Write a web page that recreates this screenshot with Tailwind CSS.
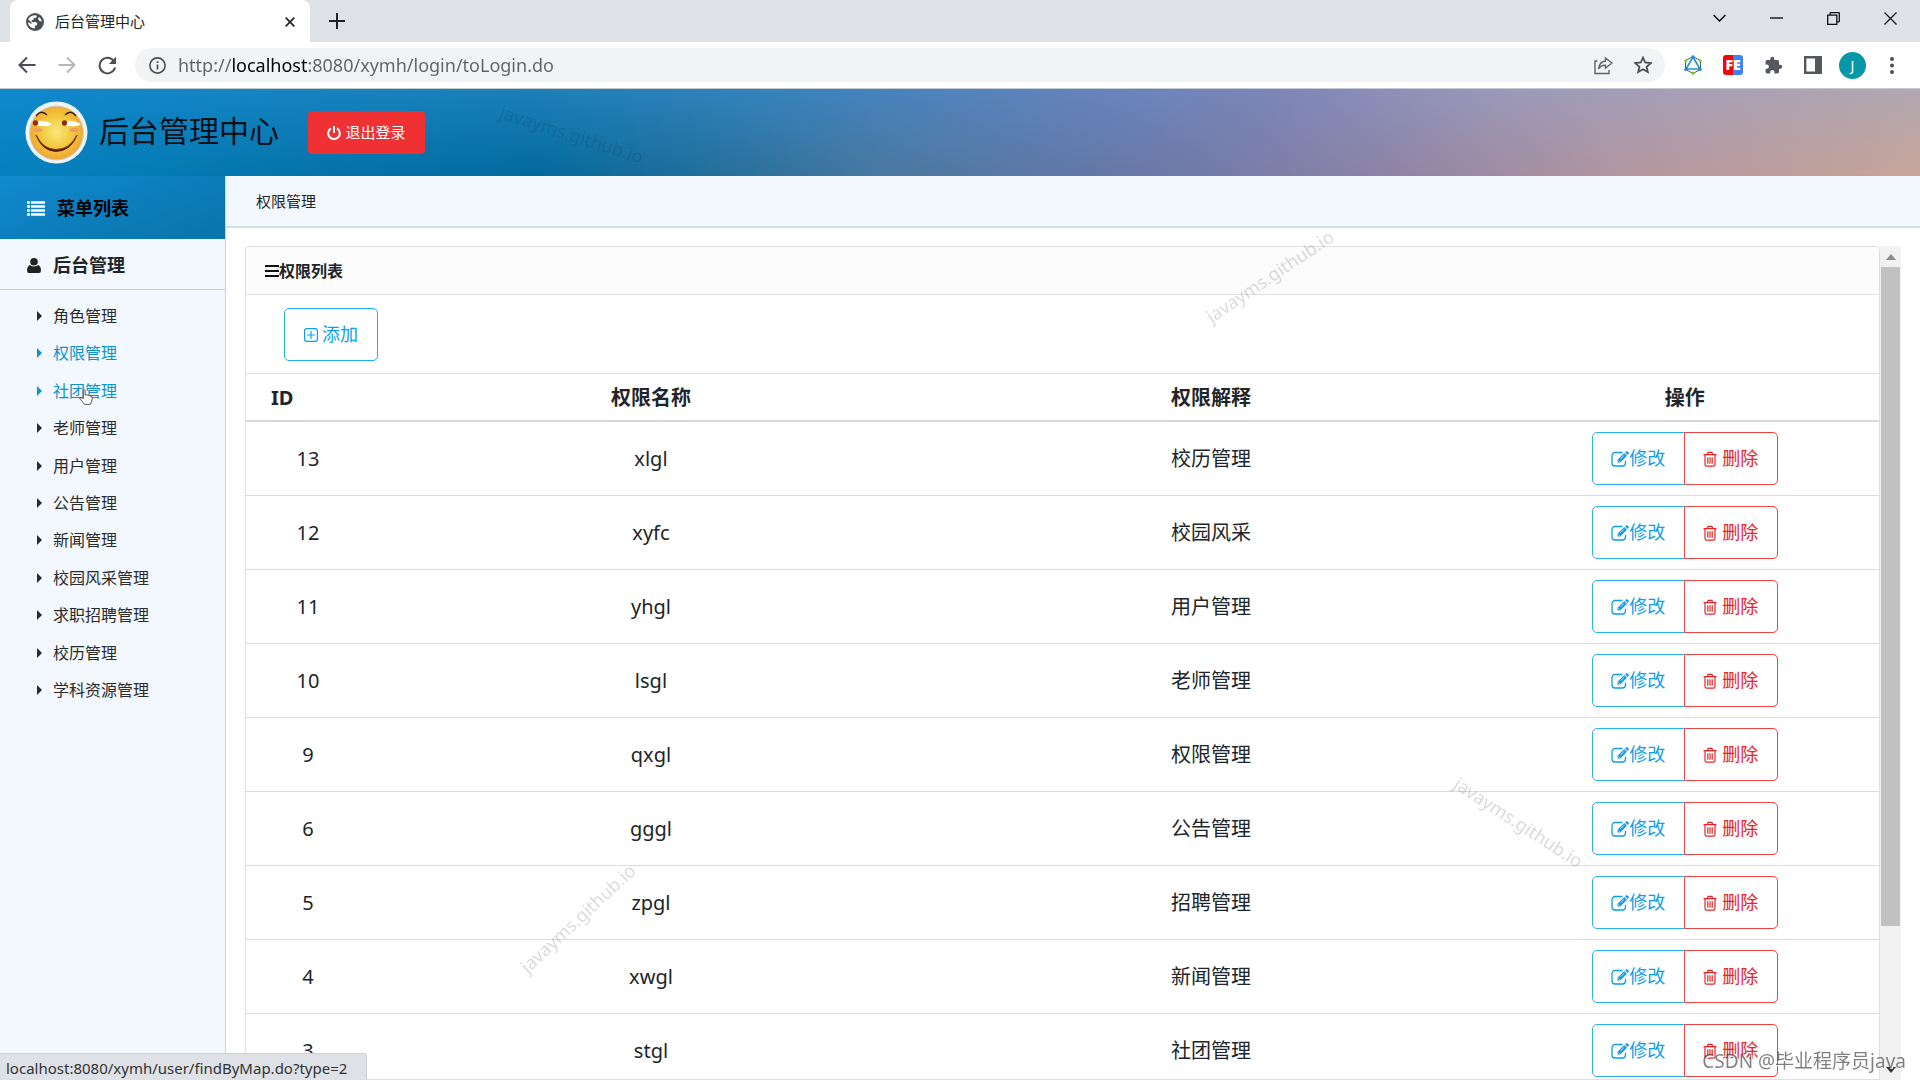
<!DOCTYPE html>
<html lang="zh-CN">
<head>
<meta charset="utf-8">
<title>后台管理中心</title>
<script src="https://cdn.jsdelivr.net/npm/@tailwindcss/browser@4"></script>
</head>
<body class="flex h-screen flex-col overflow-hidden bg-white font-['Noto_Sans','Noto_Sans_CJK_SC',sans-serif] text-[#212529]">

<svg class="hidden" aria-hidden="true">
  <symbol id="edit" viewBox="0 0 18 16">
    <path d="M11.5 1.5H4A3 3 0 0 0 1 4.500V12A3 3 0 0 0 4 15H11.500A3 3 0 0 0 14.500 12V9.800" fill="none" stroke="currentColor" stroke-width="1.300"/>
    <path d="M6.500 8.800 13.300 2 16 4.700 9.200 11.500H6.500Z" fill="currentColor"/>
    <path d="M14 1.300 15 .4a1 1 0 0 1 1.400 0L17.600 1.600a1 1 0 0 1 0 1.400L16.700 4Z" fill="currentColor"/>
    <path d="M7.300 9.300 8.700 10.700M9.500 7.800 13 4.300" stroke="#fff" stroke-width=".7"/>
  </symbol>
  <symbol id="trash" viewBox="0 0 14 16">
    <path d="M.5 3.700H13.500M4.300 3.500 5.100 1.300H8.900L9.700 3.500M2 4V13.500A1.700 1.700 0 0 0 3.700 15.200H10.300A1.700 1.700 0 0 0 12 13.500V4M4.800 6.300V12.700M7 6.300V12.700M9.200 6.300V12.700" fill="none" stroke="currentColor" stroke-width="1.200"/>
  </symbol>
</svg>

<!-- Tab strip -->
<div class="flex h-[42px] shrink-0 items-stretch bg-[#dee1e6]">
  <div class="ml-[10px] flex w-[300px] items-center rounded-t-lg bg-white pt-px pr-[10px] pl-4">
    <svg class="size-[18px]" viewBox="0 0 18 18"><circle cx="9" cy="9" r="9" fill="#4a4f54"/><path d="M2.200 6.500C3.500 3.500 6.500 2 10 2.200L11 3.500 9.500 5H7.500V7H5.500L6 9H10L11.500 11 10.500 12.500H9V15.500C5 15.500 2 12.500 2 9L4.500 10.500 6 10.500 5 8.800Z" fill="#fff"/><path d="M13 4 12 6 13.500 8 15.800 8.500A7 7 0 0 0 13 4Z" fill="#fff"/></svg>
    <span class="ml-[11px] flex-1 text-[15px]">后台管理中心</span>
    <button class="grid size-5 place-items-center" aria-label="关闭标签页"><svg class="size-[10px]" viewBox="0 0 10 10"><path d="M.7.7 9.300 9.300M9.300.7.7 9.300" stroke="#202124" stroke-width="1.700"/></svg></button>
  </div>
  <button class="ml-[17px] grid w-5 place-items-center" aria-label="新标签页"><svg class="size-4" viewBox="0 0 16 16"><path d="M8 0V16M0 8H16" stroke="#202124" stroke-width="2"/></svg></button>
  <div class="mr-px ml-auto flex items-center pb-[6px]">
    <button class="grid w-[57px] place-items-center" aria-label="搜索标签页"><svg class="h-2 w-[13px]" viewBox="0 0 13 8"><path d="M.6 1 6.500 7 12.400 1" fill="none" stroke="#111" stroke-width="1.500"/></svg></button>
    <button class="grid w-[57px] place-items-center" aria-label="最小化"><svg class="h-1 w-[13px]" viewBox="0 0 13 4"><path d="M0 2H13" stroke="#111" stroke-width="1.400"/></svg></button>
    <button class="grid w-[57px] place-items-center" aria-label="还原"><svg class="size-[13px]" viewBox="0 0 13 13"><path d="M.7 3.200H9.800V12.300H.7ZM3.200 3V1.200Q3.200.7 3.700.7H11.800Q12.300.7 12.300 1.200V9.300Q12.300 9.800 11.800 9.800H10" fill="none" stroke="#111" stroke-width="1.300"/></svg></button>
    <button class="grid w-[57px] place-items-center" aria-label="关闭"><svg class="size-[13px]" viewBox="0 0 13 13"><path d="M.5.5 12.500 12.500M12.500.5.5 12.500" stroke="#111" stroke-width="1.300"/></svg></button>
  </div>
</div>

<!-- Toolbar -->
<div class="flex h-[47px] shrink-0 items-center border-b border-[#c5cad0] bg-white pr-[18px] pl-[18px]">
  <div class="flex w-[117px] items-center gap-[22px]">
    <button aria-label="后退"><svg class="size-[18px]" viewBox="0 0 18 18"><path d="M17.500 9H2M9 1.500 1.500 9 9 16.500" fill="none" stroke="#4b4f54" stroke-width="2"/></svg></button>
    <button aria-label="前进"><svg class="size-[18px]" viewBox="0 0 18 18"><path d="M.5 9H16M9 1.500 16.500 9 9 16.500" fill="none" stroke="#b5b7b9" stroke-width="2"/></svg></button>
    <button aria-label="刷新"><svg class="size-[19px]" viewBox="0 0 19 19"><path d="M16 5.300A7.800 7.800 0 1 0 17 11.500" fill="none" stroke="#4b4f54" stroke-width="2"/><path d="M18 .8V8H10.800Z" fill="#4b4f54"/></svg></button>
  </div>
  <div class="flex h-[34px] flex-1 items-center rounded-full bg-[#f1f3f4] pr-[13px] pl-[14px]">
    <svg class="size-[17px]" viewBox="0 0 17 17"><circle cx="8.500" cy="8.500" r="7.600" fill="none" stroke="#4b4f54" stroke-width="1.600"/><path d="M8.500 7.500V12.500M8.500 4.300V6" stroke="#4b4f54" stroke-width="1.700"/></svg>
    <input type="text" aria-label="地址栏" value="http://localhost:8080/xymh/login/toLogin.do" class="ml-3 flex-1 bg-[linear-gradient(90deg,#5f6368_53px,#000_53px,#000_130px,#5f6368_130px)] bg-clip-text text-[18px] text-transparent outline-none">
    <button aria-label="分享"><svg class="size-[19px]" viewBox="0 0 19 19"><path d="M3.500 5H1V17.500H15V14" fill="none" stroke="#5f6368" stroke-width="1.400"/><path d="M11.500 2 18 7 11.500 12V9.200C8.500 9 6 10.500 4.500 13 5 8.500 7.500 5.500 11.500 5Z" fill="none" stroke="#5f6368" stroke-width="1.400"/></svg></button>
    <button class="ml-[21px]" aria-label="收藏"><svg class="size-[18px]" viewBox="0 0 18 18"><path d="M9 1.700 11.200 6.500 16.700 7.100 12.600 10.700 13.800 16 9 13.200 4.200 16 5.400 10.700 1.300 7.100 6.800 6.500Z" fill="none" stroke="#4b4f54" stroke-width="1.800"/></svg></button>
  </div>
  <div class="flex items-center">
    <button class="grid w-14 place-items-center" aria-label="扩展：API"><svg class="h-5 w-[18px]" viewBox="0 0 18 20"><path d="M9 1.500 16.500 5.700V14.300L9 18.500 1.500 14.300V5.700Z" fill="none" stroke="#555" stroke-width="1"/><path d="M9 2 16 14H2Z" fill="#fff" stroke="#1f8fd6" stroke-width="1.600"/><g fill="#1f8fd6"><circle cx="9" cy="2" r="1.700"/><circle cx="1.800" cy="14.300" r="1.600"/><circle cx="16.200" cy="14.300" r="1.600"/></g><g fill="#7ccd2a"><circle cx="1.800" cy="5.700" r="1.500"/><circle cx="16.200" cy="5.700" r="1.500"/><circle cx="9" cy="18.200" r="1.600"/></g></svg></button>
    <button class="ml-[2px] flex size-5 items-center justify-center overflow-hidden rounded-[3px] bg-[linear-gradient(90deg,#f00808_50%,#3b82f6_50%)] text-[14px] leading-5 font-black text-white" aria-label="FeHelper">FE</button>
    <button class="ml-[21px]" aria-label="扩展程序"><svg class="size-[19px]" viewBox="0 0 24 24"><path fill="#55595e" d="M20.500 11H19V7a2 2 0 0 0-2-2h-4V3.500a2.500 2.500 0 0 0-5 0V5H4a2 2 0 0 0-2 2v3.800h1.500a2.700 2.700 0 0 1 0 5.400H2V20a2 2 0 0 0 2 2h3.800v-1.500a2.700 2.700 0 0 1 5.400 0V22H17a2 2 0 0 0 2-2v-4h1.500a2.500 2.500 0 0 0 0-5z"/></svg></button>
    <button class="ml-[21px]" aria-label="侧边栏"><svg class="size-[18px]" viewBox="0 0 18 18"><path d="M1.200 1.200H16.800V16.800H1.200Z" fill="none" stroke="#55595e" stroke-width="2.400"/><path d="M11 0H18V18H11Z" fill="#55595e"/></svg></button>
    <button class="ml-[17px] size-[27px] rounded-full bg-[#0797a7] text-center text-[14px] leading-[27px] text-white" aria-label="账户">J</button>
    <button class="ml-4 grid w-5 place-items-center" aria-label="菜单"><svg class="h-[17px] w-1" viewBox="0 0 4 17"><g fill="#4b4f54"><circle cx="2" cy="2" r="2"/><circle cx="2" cy="8.500" r="2"/><circle cx="2" cy="15" r="2"/></g></svg></button>
  </div>
</div>

<!-- Site header -->
<header class="relative h-[87px] shrink-0 bg-[linear-gradient(90deg,#1089cf_0%,#1b80b8_27%,#3683bd_40%,#5f84bd_54%,#7c86b9_66%,#9b99ba_78%,#aaa1b6_90%,#b2a8b0_100%)]">
  <div class="absolute inset-0 bg-[linear-gradient(90deg,#0481bc_0%,#03699d_28%,#1f6d99_36%,#49789f_46%,#6b78a8_60%,#8d83a5_72%,#b2959f_84%,#c8a598_100%)] [mask-image:linear-gradient(to_top,#000,transparent)]"></div>
  <div class="relative flex h-full items-center pl-[25px]">
    <svg class="size-[63px]" viewBox="0 0 63 63" role="img" aria-label="站点标志">
      <defs><radialGradient id="face" cx=".5" cy=".48" r=".55"><stop offset="0" stop-color="#f8e87a"/><stop offset=".55" stop-color="#f2c83c"/><stop offset="1" stop-color="#f0a22e"/></radialGradient></defs>
      <circle cx="31.500" cy="31.500" r="31" fill="#eef3f7"/><circle cx="31.500" cy="32" r="27.500" fill="#cfd2d6"/><circle cx="31.500" cy="32" r="26.500" fill="url(#face)"/>
      <path d="M7 22Q17 17 27 23 24 26 17 25 10 25 7 22ZM35 22Q45 17 56 23 53 26 46 25 39 25 35 22Z" fill="#fff"/>
      <circle cx="10.500" cy="22" r="2.700" fill="#8f2d12"/><circle cx="39.500" cy="22" r="2.700" fill="#8f2d12"/>
      <path d="M11 15Q16 8 22 14M40 14Q46 8 51 15" fill="none" stroke="#3d1c08" stroke-width="1.400"/>
      <ellipse cx="13" cy="29" rx="4.500" ry="2" fill="#f39a63"/><ellipse cx="49" cy="29" rx="4.500" ry="2" fill="#f39a63"/>
      <path d="M11 34Q17 50 31 50.500 46 50 52 34 45 48.500 31 48.500 18 48.500 11 34Z" fill="#5e1b0a" stroke="#5e1b0a" stroke-width=".8"/>
    </svg>
    <h1 class="ml-[11px] pb-1 text-[30px] leading-10 text-[#0a1218]">后台管理中心</h1>
    <button class="ml-[29px] flex h-[43px] w-[117px] items-center justify-center gap-1 rounded-[4px] bg-[#f03134] text-[15px] text-white"><svg class="size-[14px]" viewBox="0 0 14 14"><path d="M4 2.300A5.800 5.800 0 1 0 10 2.300M7 0V7" fill="none" stroke="currentColor" stroke-width="2"/></svg>退出登录</button>
  </div>
</header>

<div class="flex min-h-0 flex-1">
  <!-- Sidebar -->
  <nav class="w-[226px] shrink-0 border-r border-[#bcdbe8] bg-[#f2f8fe]">
    <div class="flex h-[63px] items-center bg-[linear-gradient(160deg,#128ad0,#0a7cb8_60%,#0a74ad)] pt-px pl-[27px] text-[18px] font-bold text-black">
      <svg class="h-[15px] w-[18px] text-white" viewBox="0 0 18 15"><path d="M0 1.500H3M4 1.500H18M0 5.500H3M4 5.500H18M0 9.500H3M4 9.500H18M0 13.500H3M4 13.500H18" stroke="currentColor" stroke-width="2.400"/></svg>
      <span class="ml-3">菜单列表</span>
    </div>
    <div class="flex h-[51px] items-center border-b border-[#b5d5de] pt-[3px] pl-[27px] text-[18px] font-bold">
      <svg class="h-[15px] w-[14px]" viewBox="0 0 14 15"><circle cx="7" cy="3.800" r="3.800" fill="#222"/><path d="M3 7Q7 10 11 7 14 8 14 12.500 14 15 12 15H2Q0 15 0 12.500 0 8 3 7Z" fill="#222"/></svg>
      <span class="ml-3">后台管理</span>
    </div>
    <ul id="menu" class="mt-[7px] flex h-[412px] flex-col text-[16px]"></ul>
  </nav>

  <!-- Content -->
  <main class="flex min-w-0 flex-1 flex-col">
    <div class="flex h-[52px] shrink-0 items-center border-b-2 border-[#c9e3e2] bg-[#f2f8fe] pt-px pl-[30px] text-[15px]">权限管理</div>
    <div class="mt-[18px] mr-[19px] ml-[19px] flex min-h-0 flex-1">
      <section class="min-w-0 flex-1 overflow-hidden rounded-t border border-[#dfdfdf]">
        <h2 class="flex h-[48px] items-center border-b border-[#e2e2e2] bg-[#fcfcfc] pt-px pl-[19px] text-[16px] font-bold">
          <svg class="h-3 w-[14px]" viewBox="0 0 14 12"><path d="M0 1H14M0 6H14M0 11H14" stroke="#111" stroke-width="2"/></svg>权限列表
        </h2>
        <div class="flex h-[79px] items-center border-b border-[#e2e2e2] pl-[38px]">
          <button class="flex h-[53px] w-[94px] items-center justify-center gap-1 rounded-[5px] border border-[#1fb0f2] pt-px text-[18px] text-[#0a9ff0]">
            <svg class="size-[14px]" viewBox="0 0 14 14"><rect x=".6" y=".6" width="12.800" height="12.800" rx="2.300" fill="none" stroke="currentColor" stroke-width="1.200"/><path d="M7 3V11M3 7H11" stroke="currentColor" stroke-width="1.200"/></svg>添加
          </button>
        </div>
        <table class="w-full table-fixed border-collapse text-center text-[20px]">
          <colgroup><col class="w-[7.6%]"><col class="w-[34.4%]"><col class="w-[34.2%]"><col></colgroup>
          <thead>
            <tr class="h-[47px] border-b-2 border-[#d9d9d9]">
              <th class="pt-px pl-[25px] text-left">ID</th><th class="pt-px">权限名称</th><th class="pt-px">权限解释</th><th class="pt-px">操作</th>
            </tr>
          </thead>
          <tbody id="rows"></tbody>
        </table>
      </section>
      <div class="flex w-[21px] shrink-0 flex-col items-center bg-[#f1f1f1]" aria-hidden="true">
        <div class="grid h-[21px] place-items-center"><svg class="h-[6px] w-[10px]" viewBox="0 0 10 6"><path d="M5 0 10 6H0Z" fill="#8b8b8b"/></svg></div>
        <div class="h-[79%] w-[19px] bg-[#c1c1c1]"></div>
        <div class="mt-auto grid h-[21px] place-items-center"><svg class="h-[6px] w-[10px]" viewBox="0 0 10 6"><path d="M5 6 0 0H10Z" fill="#333"/></svg></div>
      </div>
    </div>
  </main>
</div>

<!-- Overlays -->
<div class="pointer-events-none fixed inset-0 text-[18px] leading-6 text-black/15">
  <span class="absolute top-[122px] left-[497px] rotate-[18deg] text-black/10">javayms.github.io</span>
  <span class="absolute top-[264px] left-[1195px] rotate-[-34deg]">javayms.github.io</span>
  <span class="absolute top-[906px] left-[503px] rotate-[-43deg]">javayms.github.io</span>
  <span class="absolute top-[810px] left-[1444px] rotate-[33deg]">javayms.github.io</span>
  <span class="absolute right-[14px] bottom-[5px] text-[19px] leading-7 text-black/50 [text-shadow:1px_1px_0_#fff]">CSDN @毕业程序员java</span>
  <svg class="absolute top-[389px] left-[79px] h-4 w-[14px]" viewBox="0 0 14 16"><path d="M4.300 9.500V1.700Q4.300.6 5.200.6T6.100 1.700V6Q7 5.300 7.900 6.200 9 5.600 9.800 6.700 11 6.200 11.800 7.400 13.500 7.200 13.300 9 13.200 12 11.300 15.400H5.500Q3.500 12.500.9 10 .3 8.500 2 8.600Z" fill="#fff" stroke="#444" stroke-width=".9"/></svg>
</div>
<div class="fixed bottom-0 left-0 h-[27px] w-[367px] rounded-tr border-t border-r border-[#cdd0d4] bg-[#dee1e6] pl-[6px] text-[15px] leading-[29px] text-[#333]">localhost:8080/xymh/user/findByMap.do?type=2</div>

<script>
const menu = ['角色管理','权限管理','社团管理','老师管理','用户管理','公告管理','新闻管理','校园风采管理','求职招聘管理','校历管理','学科资源管理'];
const active = ['权限管理','社团管理'];
document.getElementById('menu').innerHTML = menu.map(name => `
  <li class="flex flex-1 items-center pl-[37px]">
    <a href="#" class="${active.includes(name) ? 'flex items-center gap-[11px] text-[#0a93cc]' : 'flex items-center gap-[11px] text-[#2b2b2b]'}">
      <svg class="h-[10px] w-[5px]" viewBox="0 0 5 10"><path d="M0 0 5 5 0 10Z" fill="currentColor"/></svg>${name}
    </a>
  </li>`).join('');

const rows = [[13,'xlgl','校历管理'],[12,'xyfc','校园风采'],[11,'yhgl','用户管理'],[10,'lsgl','老师管理'],[9,'qxgl','权限管理'],[6,'gggl','公告管理'],[5,'zpgl','招聘管理'],[4,'xwgl','新闻管理'],[3,'stgl','社团管理']];
document.getElementById('rows').innerHTML = rows.map(([id, key, label]) => `
  <tr class="h-[74px] border-b border-[#dcdcdc]">
    <td class="pt-[2px]">${id}</td><td class="pt-[2px]">${key}</td><td class="pt-[2px]">${label}</td>
    <td>
      <div class="flex justify-center text-[18px]">
        <button class="flex h-[53px] w-[93px] items-center justify-center rounded-l-[5px] border border-[#2bb2f0] pt-px text-[#0a9ff0]"><svg class="h-4 w-[18px]"><use href="#edit"/></svg>修改</button>
        <button class="-ml-px flex h-[53px] w-[94px] items-center justify-center gap-[5px] rounded-r-[5px] border border-[#ef4444] pt-px text-[#ee2224]"><svg class="h-4 w-[14px]"><use href="#trash"/></svg>删除</button>
      </div>
    </td>
  </tr>`).join('');
</script>
</body>
</html>
